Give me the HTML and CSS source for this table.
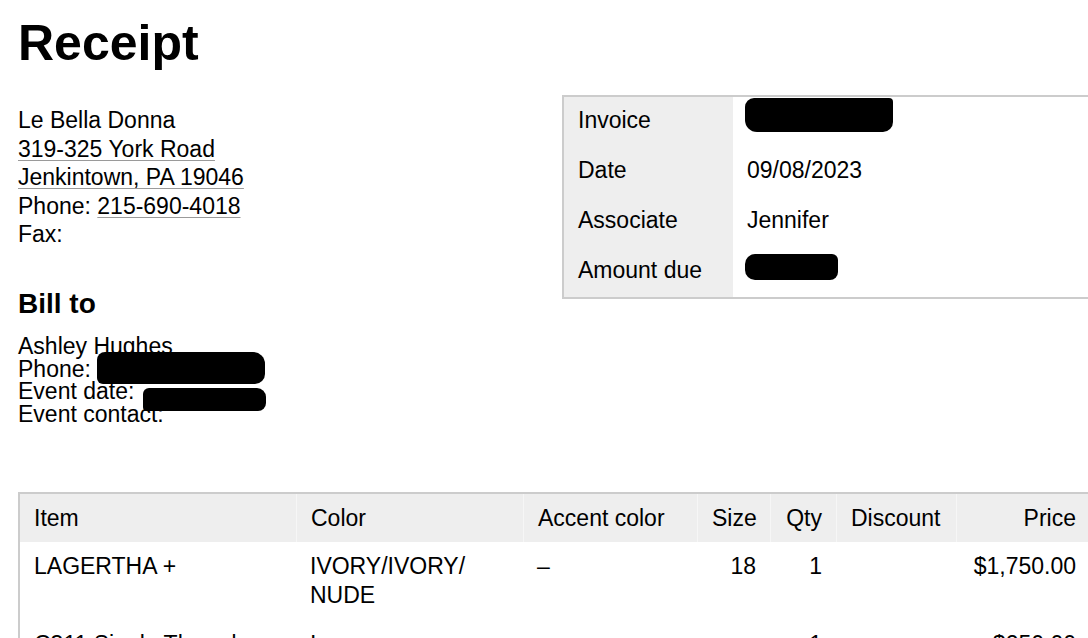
FILE: index.html
```html
<!DOCTYPE html>
<html lang="en">

<head>
    <meta charset="UTF-8">
    <meta name="viewport" content="width=device-width, initial-scale=1.0">
    <title>Receipt</title>
    <link rel="stylesheet" href="styles.css">
</head>

<body>
    <div class="page">
        <h1 class="title">Receipt</h1>

        <div class="top">
            <!-- Store + customer -->
            <div class="contact">
                <div class="store">
                    Le Bella Donna<br>
                    <a href="#">319-325 York Road</a><br>
                    <a href="#">Jenkintown, PA 19046</a><br>
                    Phone: <a href="#">215-690-4018</a><br>
                    Fax:
                </div>

                <h2 class="bill-title">Bill to</h2>
                <div class="bill">
                    Ashley Hughes<br>
                    Phone: <span class="redact redact-phone"></span><br>
                    Event date: <span class="redact redact-event"></span><br>
                    Event contact:
                </div>
            </div>

            <!-- Invoice info -->
            <table class="info">
                <tr>
                    <th>Invoice</th>
                    <td><span class="redact redact-invoice"></span></td>
                </tr>
                <tr>
                    <th>Date</th>
                    <td>09/08/2023</td>
                </tr>
                <tr>
                    <th>Associate</th>
                    <td>Jennifer</td>
                </tr>
                <tr>
                    <th>Amount due</th>
                    <td><span class="redact redact-amount"></span></td>
                </tr>
            </table>
        </div>

        <table class="items">
            <colgroup>
                <col class="col-item">
                <col class="col-color">
                <col class="col-accent">
                <col class="col-size">
                <col class="col-qty">
                <col class="col-discount">
                <col class="col-price">
            </colgroup>
            <thead>
                <tr>
                    <th>Item</th>
                    <th>Color</th>
                    <th>Accent color</th>
                    <th class="num">Size</th>
                    <th class="num">Qty</th>
                    <th>Discount</th>
                    <th class="num">Price</th>
                </tr>
            </thead>
            <tbody>
                <tr>
                    <td>LAGERTHA +</td>
                    <td>IVORY/IVORY/<wbr>NUDE</td>
                    <td>&ndash;</td>
                    <td class="num">18</td>
                    <td class="num">1</td>
                    <td></td>
                    <td class="num">$1,750.00</td>
                </tr>
                <tr>
                    <td>C311 Single Thread Bustle</td>
                    <td>Ivory</td>
                    <td>&ndash;</td>
                    <td class="num"></td>
                    <td class="num">1</td>
                    <td></td>
                    <td class="num">$250.00</td>
                </tr>
            </tbody>
        </table>
    </div>
</body>

</html>
```

FILE: styles.css
```css
html {
    overflow: hidden;
}

body {
    margin: 0;
    font-family: "Liberation Sans", Arial, sans-serif;
    font-size: 23px;
    color: #000;
    background: #fff;
}

.page {
    width: 1074px;
    padding-left: 18px;
}

.title {
    margin: 18px 0 0;
    font-size: 50px;
    line-height: 50px;
    font-weight: bold;
}

.top {
    display: flex;
    justify-content: space-between;
    align-items: flex-start;
    margin-top: 27px;
}

.contact {
    flex: 1;
}

.store {
    padding-top: 11px;
    line-height: 28.6px;
}

.store a {
    color: inherit;
    text-decoration: underline;
    text-decoration-color: #9a9a9a;
    text-decoration-thickness: 1px;
    text-underline-offset: 3px;
}

.bill-title {
    margin: 39px 0 0;
    font-size: 28px;
    line-height: 32px;
    font-weight: bold;
}

.bill {
    margin-top: 15px;
    line-height: 22.7px;
}

/* black marker over private data */
.redact {
    display: inline-block;
    position: relative;
    background: #000;
    vertical-align: baseline;
}

.redact-phone {
    width: 168px;
    height: 32px;
    margin-bottom: -32px;
    top: -25px;
    border-radius: 8px 12px 10px 6px;
}

.redact-event {
    width: 123px;
    height: 23px;
    margin-bottom: -23px;
    margin-left: 2px;
    top: -11px;
    border-radius: 6px 9px 8px 4px;
}

.redact-invoice {
    width: 148px;
    height: 34px;
    margin-bottom: -34px;
    margin-left: -2px;
    top: -30px;
    border-radius: 9px 4px 10px 12px;
}

.redact-amount {
    width: 93px;
    height: 26px;
    margin-bottom: -26px;
    margin-left: -2px;
    top: -24px;
    border-radius: 10px 6px 8px 10px;
}

.info {
    width: 530px;
    box-sizing: border-box;
    border: 2px solid #ccc;
    border-spacing: 0;
    line-height: 28.6px;
}

.info th,
.info td {
    padding: 8.5px 14px 13px;
    text-align: left;
    font-weight: normal;
}

.info th {
    width: 141px;
    background: #eee;
}

.items {
    margin-top: 66px;
    width: 1074px;
    box-sizing: border-box;
    table-layout: fixed;
    border: 2px solid #ccc;
    border-spacing: 0;
    line-height: 28.6px;
}

.col-item { width: 276px; }
.col-color { width: 227px; }
.col-accent { width: 174px; }
.col-size { width: 73px; }
.col-qty { width: 66px; }
.col-discount { width: 120px; }
.col-price { width: 134px; }

.items th,
.items td {
    padding: 10px 14px;
    text-align: left;
    vertical-align: top;
    font-weight: normal;
}

.items th {
    background: #eee;
}

.items th + th {
    border-left: 1px solid #f6f6f6;
}

.items .num {
    text-align: right;
}
```
